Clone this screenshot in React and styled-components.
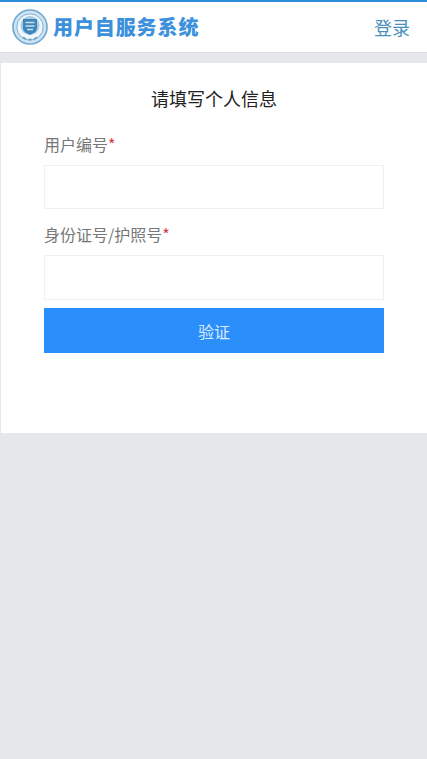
import React from 'react';
import styled, { createGlobalStyle } from 'styled-components';

const cjk = '"Noto Sans CJK SC", "Noto Sans", sans-serif';

const GlobalStyle = createGlobalStyle`
  html, body {
    margin: 0;
    padding: 0;
    height: 100%;
    background: #e5e7eb;
    font-family: ${cjk};
  }
  * {
    box-sizing: border-box;
  }
`;

const Page = styled.div`
  width: 427px;
  min-height: 759px;
  background: #e5e7ea;
  overflow: hidden;
`;

const Header = styled.header`
  display: flex;
  align-items: center;
  justify-content: space-between;
  height: 53px;
  padding: 0 17px 0 12px;
  background: #fff;
  border-top: 2px solid #2a8fd8;
  border-bottom: 1px solid #dcdcdc;
`;

const Brand = styled.div`
  display: flex;
  align-items: center;
  gap: 5px;
`;

const BrandName = styled.h1`
  margin: 0;
  font-size: 20px;
  line-height: 28px;
  font-weight: 900;
  color: #3c90dc;
  letter-spacing: 0.9px;
`;

const LoginLink = styled.a`
  font-size: 18px;
  line-height: 26px;
  color: #4a8fbd;
  text-decoration: none;
`;

const Card = styled.main`
  height: 370px;
  margin: 10px 0 0 1px;
  padding: 21px 43px 0;
  background: #fff;
`;

const Title = styled.h2`
  margin: 0 0 20px;
  font-size: 18px;
  line-height: 28px;
  font-weight: 400;
  text-align: center;
  color: #222;
`;

const Field = styled.div`
  display: flex;
  flex-direction: column;
  margin-bottom: ${props => props.$gap}px;
`;

const Label = styled.label`
  margin-bottom: 9px;
  font-size: 16px;
  line-height: 24px;
  color: #777;
`;

const Required = styled.span`
  color: #d9363e;
`;

const Input = styled.input`
  display: block;
  width: 100%;
  height: ${props => props.$height}px;
  padding: 0 10px;
  font-family: ${cjk};
  font-size: 16px;
  background: #fff;
  border: 1px solid #f0f0f0;
  outline: none;
`;

const SubmitButton = styled.button`
  display: block;
  width: 100%;
  height: 45px;
  padding: 0;
  font-family: ${cjk};
  font-size: 16px;
  color: #dcebff;
  background: #2b8ffb;
  border: none;
`;

function Logo() {
  return (
    <svg width="36" height="36" viewBox="0 0 36 36" aria-hidden="true">
      <circle cx="18" cy="18" r="17" fill="#cfe2f1" stroke="#6ea8d3" strokeWidth="1.6" />
      <circle cx="18" cy="18" r="13.200" fill="#f1f6fa" stroke="#7fb2d8" strokeWidth="1" />
      <circle cx="18" cy="16.500" r="9.500" fill="#a9cbe5" />
      <path d="M11 10h14v9c0 3.400-3.200 5.400-7 6.800-3.800-1.400-7-3.400-7-6.800z" fill="#3f86bd" />
      <path d="M13.500 13.500h9M13.500 17h9M15 20.500h6" stroke="#c9dfef" strokeWidth="1.300" fill="none" />
      <path d="M11 28.500l3 1.500M16.500 30.500h3M22 30l3-1.500" stroke="#6a9cc2" strokeWidth="1.400" fill="none" />
    </svg>
  );
}

function App() {
  return (
    <Page>
      <GlobalStyle />
      <Header>
        <Brand>
          <Logo />
          <BrandName>用户自服务系统</BrandName>
        </Brand>
        <LoginLink href="#">登录</LoginLink>
      </Header>
      <Card>
        <Title>请填写个人信息</Title>
        <Field $gap={13}>
          <Label>用户编号<Required>*</Required></Label>
          <Input $height={44} />
        </Field>
        <Field $gap={8}>
          <Label>身份证号/护照号<Required>*</Required></Label>
          <Input $height={45} />
        </Field>
        <SubmitButton>验证</SubmitButton>
      </Card>
    </Page>
  );
}

export default App;
